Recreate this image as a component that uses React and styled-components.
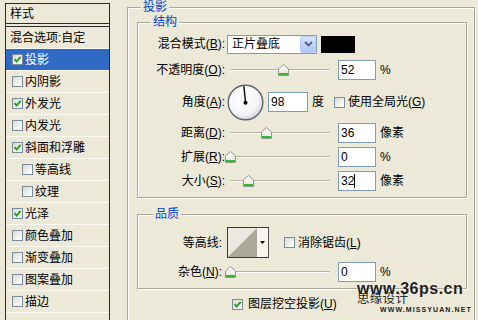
import React from 'react';
import styled, { createGlobalStyle } from 'styled-components';

const GlobalStyle = createGlobalStyle`
  html, body {
    margin: 0;
    padding: 0;
    overflow: hidden;
    background: #ece9d8;
  }
  body {
    font-family: "Liberation Sans", "Noto Sans CJK SC", sans-serif;
    font-size: 12px;
    line-height: 14px;
    color: #000;
  }
`;

const Dialog = styled.div`
  position: relative;
  display: flex;
  align-items: flex-start;
  width: 478px;
  height: 320px;
  overflow: hidden;
  background: #ece9d8;
`;

// ---- left style list ----
const StyleList = styled.div`
  flex: none;
  width: 105px;
  height: 330px;
  margin: 3px 0 0 5px;
  box-sizing: border-box;
  border: 1px solid #2b2b2b;
  border-bottom: none;
`;

const ListHeader = styled.div`
  height: 19px;
  padding-left: 4px;
  display: flex;
  align-items: center;
  border-bottom: 4px double #2b2b2b;
`;

const ListItem = styled.div`
  height: 21px;
  display: flex;
  align-items: center;
  gap: 2px;
  padding-left: ${p => p.$indent}px;
  border-bottom: 1px solid #fbfaf4;
  background: ${p => (p.$active ? '#316ac5' : 'transparent')};
  color: ${p => (p.$active ? '#fff' : '#000')};
`;

// ---- checkbox ----
const Box = styled.span`
  flex: none;
  display: inline-flex;
  width: 11px;
  height: 11px;
  box-sizing: border-box;
  border: 1px solid #7b8b9e;
  background: linear-gradient(135deg, #dcdbd2, #ffffff);
  margin-left: ${p => p.$ml || 0}px;
  margin-right: ${p => p.$mr || 0}px;
`;

function Check({ checked, ml, mr }) {
  return (
    <Box $ml={ml} $mr={mr}>
      {checked && (
        <svg width="9" height="9" viewBox="0 0 9 9">
          <path d="M1.5 4.2 L3.6 6.5 L7.6 1.8" fill="none" stroke="#21a121" strokeWidth="1.9" />
        </svg>
      )}
    </Box>
  );
}

// ---- group boxes ----
const Main = styled.div`
  flex: none;
  width: 348px;
  margin: 7px 0 0 17px;
`;

const Group = styled.div`
  position: relative;
  box-sizing: border-box;
  width: ${p => p.$w}px;
  height: ${p => p.$h}px;
  margin-top: ${p => p.$mt || 0}px;
  padding: ${p => p.$pad};
  border: 1px solid #aca899;
  box-shadow: inset 1px 1px 0 #fff, 1px 1px 0 #fff;
`;

const Legend = styled.span`
  position: absolute;
  top: -8px;
  left: ${p => p.$x}px;
  padding: 0 2px;
  background: #ece9d8;
  color: #0046d5;
  line-height: 14px;
`;

const Row = styled.div`
  display: flex;
  align-items: center;
  height: ${p => p.$h || 20}px;
  margin-top: ${p => p.$mt || 0}px;
  margin-left: ${p => p.$ml || 0}px;
`;

const Label = styled.div`
  flex: none;
  width: ${p => p.$w || 87}px;
  text-align: right;
  white-space: nowrap;
`;

const Select = styled.div`
  flex: none;
  display: flex;
  align-items: center;
  width: 90px;
  height: 19px;
  margin-left: 2px;
  box-sizing: border-box;
  border: 1px solid #7f9db9;
  background: #fff;
  padding-left: 4px;
`;

const SelectText = styled.span`
  flex: 1;
`;

const SelectButton = styled.span`
  flex: none;
  display: flex;
  align-items: center;
  justify-content: center;
  width: 16px;
  height: 17px;
  box-sizing: border-box;
  border: 1px solid #b9cdf7;
  border-radius: 2px;
  background: linear-gradient(#d6e2fc, #b2c6f4);
`;

const Swatch = styled.div`
  flex: none;
  width: 34px;
  height: 17px;
  margin-left: 4px;
  background: #000;
`;

const Slider = styled.div`
  position: relative;
  flex: none;
  display: flex;
  align-items: center;
  width: 104px;
  height: 20px;
  margin-left: ${p => p.$ml || 3}px;
  padding: 0 2px;
  box-sizing: border-box;
`;

const Track = styled.div`
  flex: 1;
  height: 1px;
  background: #b4b1a3;
  border-bottom: 1px solid #fff;
  border-radius: 1px;
`;

const ThumbWrap = styled.span`
  position: absolute;
  top: 4px;
  width: 11px;
  height: 12px;
`;

function Thumb({ pct }) {
  return (
    <ThumbWrap style={{ left: 2 + pct - 5.5 }}>
      <svg width="11" height="12" viewBox="0 0 11 12">
        <defs>
          <linearGradient id="tg" x1="0" y1="0" x2="0" y2="1">
            <stop offset="0" stopColor="#ffffff" />
            <stop offset="1" stopColor="#e3e2da" />
          </linearGradient>
        </defs>
        <path d="M0.5 5 L5.5 0.5 L10.5 5 V11.5 H0.5 Z" fill="url(#tg)" stroke="#8d9b8d" />
        <path d="M1 10 H10" stroke="#3bb33b" strokeWidth="2" />
      </svg>
    </ThumbWrap>
  );
}

const Field = styled.div`
  flex: none;
  display: flex;
  align-items: center;
  width: ${p => p.$w || 38}px;
  height: 20px;
  margin-left: ${p => p.$ml || 6}px;
  box-sizing: border-box;
  border: 1px solid #7f9db9;
  background: #fff;
  padding-left: 2px;
`;

const Caret = styled.span`
  width: 1px;
  height: 14px;
  background: #000;
`;

const Unit = styled.span`
  margin-left: ${p => p.$ml || 4}px;
  white-space: nowrap;
`;

const Dial = styled.div`
  flex: none;
  width: 37px;
  height: 37px;
  margin-left: 2px;
`;

const Contour = styled.div`
  flex: none;
  display: flex;
  width: 42px;
  height: 31px;
  margin-left: 5px;
  box-sizing: border-box;
  border: 1px solid #3a3a3a;
  border-right-color: #555;
`;

const ContourArrow = styled.div`
  flex: 1;
  display: flex;
  align-items: center;
  justify-content: center;
  background: #f5f4ef;
`;

// ---- watermark over the picture ----
const Watermark = styled.div`
  position: absolute;
  left: 357px;
  top: 281px;
  width: 112px;
  pointer-events: none;
`;

const MarkSite = styled.div`
  font-family: "Liberation Sans", sans-serif;
  font-weight: 700;
  font-size: 16px;
  line-height: 16px;
  letter-spacing: 0.5px;
  color: #1e1e1e;
  text-shadow: 0 0 2px #fff;
`;

const MarkName = styled.div`
  margin-top: -5px;
  font-family: "Noto Sans CJK SC", sans-serif;
  font-size: 12.5px;
  line-height: 12px;
  color: #2a2a2a;
  letter-spacing: 0.3px;
`;

const MarkUrl = styled.div`
  margin: 2px 0 0 23px;
  font-family: "Liberation Sans", sans-serif;
  font-weight: 700;
  font-size: 7px;
  line-height: 7px;
  letter-spacing: 1.1px;
  color: #222;
`;

const styles = [
  { t: '投影', c: true, active: true },
  { t: '内阴影' },
  { t: '外发光', c: true },
  { t: '内发光' },
  { t: '斜面和浮雕', c: true },
  { t: '等高线', sub: true },
  { t: '纹理', sub: true },
  { t: '光泽', c: true },
  { t: '颜色叠加' },
  { t: '渐变叠加' },
  { t: '图案叠加' },
  { t: '描边' },
];

function SliderRow({ label, k, pct, value, unit, mt, caret }) {
  return (
    <Row $mt={mt}>
      <Label>{label}(<u>{k}</u>):</Label>
      <Slider>
        <Track />
        <Thumb pct={pct} />
      </Slider>
      <Field>
        {value}
        {caret && <Caret />}
      </Field>
      <Unit>{unit}</Unit>
    </Row>
  );
}

export default function App() {
  return (
    <Dialog>
      <GlobalStyle />
      <StyleList>
        <ListHeader>样式</ListHeader>
        <ListItem $indent={4}>混合选项:自定</ListItem>
        {styles.map(s => (
          <ListItem key={s.t} $indent={s.sub ? 16 : 6} $active={s.active}>
            <Check checked={s.c} />
            {s.t}
          </ListItem>
        ))}
      </StyleList>

      <Main>
        <Group $w={348} $h={330} $pad="14px 0 0 9px">
          <Legend $x={13}>投影</Legend>

          <Group $w={330} $h={176} $pad="11px 0 0 0">
            <Legend $x={13}>结构</Legend>
            <Row>
              <Label>混合模式(<u>B</u>):</Label>
              <Select>
                <SelectText>正片叠底</SelectText>
                <SelectButton>
                  <svg width="9" height="6" viewBox="0 0 9 6">
                    <path d="M1 1 L4.5 4.5 L8 1" fill="none" stroke="#4d6185" strokeWidth="1.8" />
                  </svg>
                </SelectButton>
              </Select>
              <Swatch />
            </Row>
            <SliderRow label="不透明度" k="O" pct={53} value="52" unit="%" mt={6} />
            <Row $h={38} $mt={3}>
              <Label>角度(<u>A</u>):</Label>
              <Dial>
                <svg width="37" height="37" viewBox="0 0 37 37">
                  <defs>
                    <radialGradient id="dg" cx="0.4" cy="0.35" r="0.7">
                      <stop offset="0" stopColor="#ffffff" />
                      <stop offset="0.7" stopColor="#f3f4f7" />
                      <stop offset="1" stopColor="#c9ced8" />
                    </radialGradient>
                  </defs>
                  <circle cx="18.5" cy="18.5" r="17.3" fill="url(#dg)" stroke="#5e636c" strokeWidth="1.4" />
                  <line x1="18.5" y1="18.5" x2="16.9" y2="2.2" stroke="#000" strokeWidth="1.4" />
                  <circle cx="18.5" cy="18.8" r="2" fill="#000" />
                </svg>
              </Dial>
              <Field $w={40} $ml={4}>98</Field>
              <Unit>度</Unit>
              <Check ml={10} mr={3} />
              <span>使用全局光(<u>G</u>)</span>
            </Row>
            <SliderRow label="距离" k="D" pct={36} value="36" unit="像素" mt={2} />
            <SliderRow label="扩展" k="R" pct={0} value="0" unit="%" mt={4} />
            <SliderRow label="大小" k="S" pct={18} value="32" unit="像素" mt={4} caret />
          </Group>

          <Group $w={330} $h={75} $mt={16} $pad="12px 0 0 0">
            <Legend $x={15}>品质</Legend>
            <Row $h={31}>
              <Label $w={84}>等高线:</Label>
              <Contour>
                <svg width="29" height="29" viewBox="0 0 29 29">
                  <rect width="29" height="29" fill="#ebe9e0" />
                  <path d="M0 29 L29 0 V29 Z" fill="#aca899" />
                </svg>
                <ContourArrow>
                  <svg width="5" height="3" viewBox="0 0 5 3">
                    <path d="M0 0 H5 L2.5 3 Z" fill="#000" />
                  </svg>
                </ContourArrow>
              </Contour>
              <Check ml={15} mr={3} />
              <span>消除锯齿(<u>L</u>)</span>
            </Row>
            <Row $mt={4}>
              <Label $w={84}>杂色(<u>N</u>):</Label>
              <Slider $ml={6}>
                <Track />
                <Thumb pct={0} />
              </Slider>
              <Field>0</Field>
              <Unit>%</Unit>
            </Row>
          </Group>

          <Row $h={12} $mt={9} $ml={95}>
            <Check checked mr={5} />
            <span>图层挖空投影(<u>U</u>)</span>
          </Row>
        </Group>
      </Main>

      <Watermark>
        <MarkSite>www.36ps.cn</MarkSite>
        <MarkName>思缘设计</MarkName>
        <MarkUrl>WWW.MISSYUAN.NET</MarkUrl>
      </Watermark>
    </Dialog>
  );
}
